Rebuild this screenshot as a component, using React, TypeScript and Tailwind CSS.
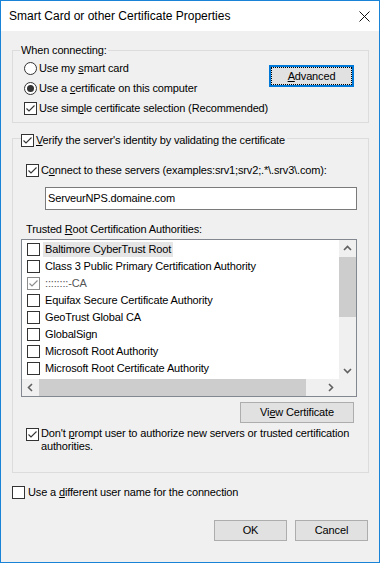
import type { ReactNode } from "react";

const Check = ({ checked = false, muted = false }: { checked?: boolean; muted?: boolean }) => (
  <svg width="13" height="13" viewBox="0 0 13 13" className="shrink-0">
    <rect x="0.5" y="0.5" width="12" height="12" fill="#fff" stroke={muted ? "#8c8c8c" : "#333"} />
    {checked && (
      <polyline points="2.5,6.5 5,9 10.5,3.5" fill="none" stroke={muted ? "#8c8c8c" : "#333"} strokeWidth="1.1" />
    )}
  </svg>
);

const Radio = ({ checked = false }: { checked?: boolean }) => (
  <svg width="13" height="13" viewBox="0 0 13 13" className="shrink-0">
    <circle cx="6.5" cy="6.5" r="6" fill="#fff" stroke="#333" />
    {checked && <circle cx="6.5" cy="6.5" r="3.5" fill="#333" />}
  </svg>
);

const U = ({ children }: { children: ReactNode }) => (
  <span className="underline decoration-1 underline-offset-[1px]">{children}</span>
);

const Chevron = ({ dir }: { dir: "up" | "down" | "left" | "right" }) => {
  const pts = {
    up: "1,5 4.5,1.5 8,5",
    down: "1,2 4.5,5.5 8,2",
    left: "5,1 1.5,4.5 5,8",
    right: "2,1 5.5,4.5 2,8",
  }[dir];
  const vertical = dir === "up" || dir === "down";
  return (
    <svg width={vertical ? 9 : 7} height={vertical ? 7 : 9} viewBox={vertical ? "0 0 9 7" : "0 0 7 9"}>
      <polyline points={pts} fill="none" stroke="#606060" strokeWidth="1.6" />
    </svg>
  );
};

const certs = [
  "Baltimore CyberTrust Root",
  "Class 3 Public Primary Certification Authority",
  "::::::::-CA",
  "Equifax Secure Certificate Authority",
  "GeoTrust Global CA",
  "GlobalSign",
  "Microsoft Root Authority",
  "Microsoft Root Certificate Authority",
];

export default function App() {
  return (
    <div className="w-[380px] h-[563px] border border-[#1883d7] bg-[#f0f0f0] flex flex-col text-black text-[11px] tracking-[-0.15px] font-['Liberation_Sans',Arial,sans-serif]">
      {/* Title bar */}
      <div className="h-[30px] bg-white flex items-center pl-[8px] pr-[9px]">
        <span className="text-[12px] tracking-normal">Smart Card or other Certificate Properties</span>
        <svg width="11" height="11" viewBox="0 0 11 11" className="ml-auto">
          <path d="M0.5 0.5 L10.5 10.5 M10.5 0.5 L0.5 10.5" stroke="#111" strokeWidth="1" />
        </svg>
      </div>

      <div className="flex-1 flex flex-col pl-[11px] pr-[10px]">
        {/* When connecting */}
        <div className="relative mt-[19px] border border-[#dcdcdc] pt-[7px] pb-[4px] flex">
          <span className="absolute left-[7px] top-[-7px] px-[1px] leading-[13px] bg-[#f0f0f0]">When connecting:</span>
          <div className="flex flex-col pl-[11px]">
            <div className="h-[20px] flex items-center gap-[2px]">
              <Radio />
              <span>Use my <U>s</U>mart card</span>
            </div>
            <div className="h-[20px] flex items-center gap-[2px]">
              <Radio checked />
              <span>Use a <U>c</U>ertificate on this computer</span>
            </div>
            <div className="h-[20px] flex items-center gap-[2px]">
              <Check checked />
              <span>Use sim<U>p</U>le certificate selection (Recommended)</span>
            </div>
          </div>
          <button className="ml-auto mr-[14px] mt-[7px] w-[85px] h-[22px] border-2 border-[#0078d7] bg-[#e1e1e1] p-0">
            <span className="flex items-center justify-center w-full h-full border border-dotted border-black">
              <U>A</U>dvanced
            </span>
          </button>
        </div>

        {/* Verify */}
        <div className="relative mt-[15px] border border-[#dcdcdc] pt-[25px] pb-[19px] flex flex-col">
          <div className="absolute left-[8px] top-[-5px] h-[13px] pr-[2px] flex items-center gap-[2px] bg-[#f0f0f0]">
            <Check checked />
            <span className="leading-[13px]"><U>V</U>erify the server's identity by validating the certificate</span>
          </div>

          <div className="h-[13px] ml-[13px] flex items-center gap-[2px]">
            <Check checked />
            <span>C<U>o</U>nnect to these servers {"(examples:srv1;srv2;.*\\.srv3\\.com):"}</span>
          </div>

          <div className="mt-[10px] ml-[32px] w-[312px] h-[23px] border border-[#7a7a7a] bg-white pl-[2px] flex items-center">
            ServeurNPS.domaine.com
          </div>

          <div className="mt-[13px] ml-[13px] leading-[13px]">
            Trusted <U>R</U>oot Certification Authorities:
          </div>

          <div className="mt-[3px] ml-[8px] w-[336px] h-[158px] border border-[#828790] bg-white flex flex-col">
            <div className="flex h-[139px]">
              <div className="flex-1 overflow-hidden pt-[1px]">
                {certs.map((c, i) => (
                  <div key={c} className="h-[17px] pl-[5px] flex items-center">
                    <Check checked={i === 2} muted={i === 2} />
                    <span
                      className={`ml-[3px] px-[2px] leading-[15px] whitespace-nowrap ${
                        i === 0 ? "bg-[#e5e5e5]" : ""
                      } ${i === 2 ? "text-[#555]" : ""}`}
                    >
                      {c}
                    </span>
                  </div>
                ))}
              </div>
              <div className="w-[17px] bg-[#f0f0f0] flex flex-col">
                <div className="h-[17px] flex items-center justify-center">
                  <Chevron dir="up" />
                </div>
                <div className="h-[60px] bg-[#cdcdcd]" />
                <div className="flex-1" />
                <div className="h-[17px] flex items-center justify-center">
                  <Chevron dir="down" />
                </div>
              </div>
            </div>
            <div className="flex h-[17px]">
              <div className="flex-1 bg-[#f0f0f0] flex">
                <div className="w-[17px] flex items-center justify-center">
                  <Chevron dir="left" />
                </div>
                <div className="w-[267px] bg-[#cdcdcd]" />
                <div className="flex-1" />
                <div className="w-[17px] flex items-center justify-center">
                  <Chevron dir="right" />
                </div>
              </div>
              <div className="w-[17px] bg-[#f0f0f0]" />
            </div>
          </div>

          <button className="self-end mt-[5px] mr-[14px] w-[114px] h-[21px] border border-[#adadad] bg-[#e1e1e1] p-0">
            Vi<U>e</U>w Certificate
          </button>

          <div className="mt-[4px] ml-[13px] mr-[8px] flex items-start gap-[2px]">
            <div className="mt-[1px]">
              <Check checked />
            </div>
            <span className="flex-1 leading-[13px]">
              Don't <U>p</U>rompt user to authorize new servers or trusted certification authorities.
            </span>
          </div>
        </div>

        {/* Different user */}
        <div className="mt-[13px] h-[13px] flex items-center gap-[3px]">
          <Check />
          <span>Use a <U>d</U>ifferent user name for the connection</span>
        </div>

        <div className="mt-[21px] flex justify-end gap-[8px] pr-[1px]">
          <button className="w-[73px] h-[21px] border border-[#adadad] bg-[#e1e1e1] p-0">OK</button>
          <button className="w-[73px] h-[21px] border border-[#adadad] bg-[#e1e1e1] p-0">Cancel</button>
        </div>
      </div>
    </div>
  );
}
